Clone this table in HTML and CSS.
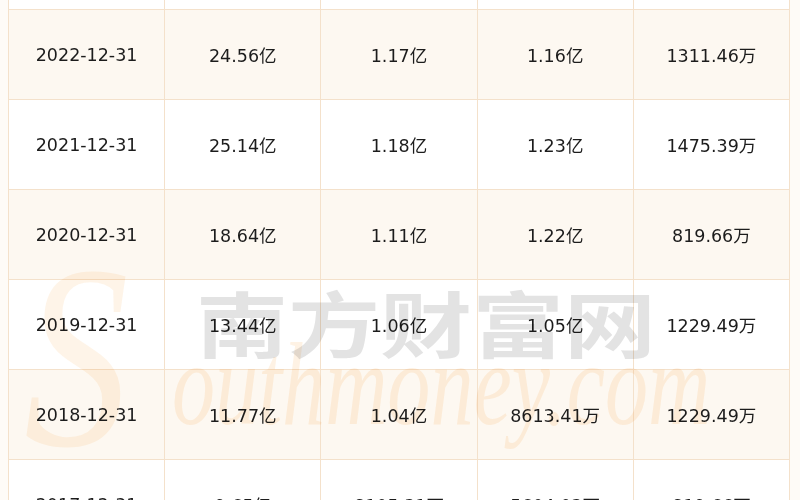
FILE: index.html
```html
<!DOCTYPE html>
<html lang="zh-CN">
<head>
<meta charset="utf-8">
<title>财务数据</title>
<link rel="stylesheet" href="styles.css">
</head>
<body>
<div class="page">
  <table class="data">
    <tbody>
      <tr class="stub"><td></td><td></td><td></td><td></td><td></td></tr>
      <tr class="alt"><td>2022-12-31</td><td>24.56亿</td><td>1.17亿</td><td>1.16亿</td><td>1311.46万</td></tr>
      <tr><td>2021-12-31</td><td>25.14亿</td><td>1.18亿</td><td>1.23亿</td><td>1475.39万</td></tr>
      <tr class="alt"><td>2020-12-31</td><td>18.64亿</td><td>1.11亿</td><td>1.22亿</td><td>819.66万</td></tr>
      <tr><td>2019-12-31</td><td>13.44亿</td><td>1.06亿</td><td>1.05亿</td><td>1229.49万</td></tr>
      <tr class="alt"><td>2018-12-31</td><td>11.77亿</td><td>1.04亿</td><td>8613.41万</td><td>1229.49万</td></tr>
      <tr><td>2017-12-31</td><td>9.65亿</td><td>8105.31万</td><td>5604.02万</td><td>819.66万</td></tr>
    </tbody>
  </table>
  <div class="wm wm-s">S</div>
  <div class="wm wm-en">outhmoney.com</div>
  <div class="wm wm-cn">南方财富网</div>
</div>
</body>
</html>
```

FILE: styles.css
```css
html, body {
  margin: 0;
  padding: 0;
  background: #fefbf7;
}
.page {
  position: relative;
  width: 800px;
  height: 500px;
  overflow: hidden;
  padding-left: 8px;
  box-sizing: border-box;
}
.data {
  border-collapse: collapse;
  table-layout: fixed;
  width: 782px;
  font-family: "DejaVu Sans", "Noto Sans CJK SC", sans-serif;
  font-size: 17.5px;
  color: #1c1c1c;
}
.data td {
  border: 1px solid #f4e1cb;
  height: 89px;
  padding: 0;
  text-align: center;
  vertical-align: middle;
  background: #ffffff;
  white-space: nowrap;
}
.data tr.alt td {
  background: #fdf8f1;
}
.data tr.stub td {
  height: 9px;
  border-top: none;
}
.wm {
  position: absolute;
  pointer-events: none;
  line-height: 1;
  white-space: nowrap;
  mix-blend-mode: multiply;
}
.wm-s {
  left: 24px;
  top: 226px;
  font-family: "Liberation Serif", serif;
  font-style: italic;
  font-size: 262px;
  color: rgba(250, 205, 150, 0.22);
  transform: scaleX(0.8);
  transform-origin: left top;
}
.wm-en {
  left: 172px;
  top: 326px;
  font-family: "Liberation Serif", serif;
  font-style: italic;
  font-size: 118px;
  color: rgba(250, 205, 150, 0.26);
  transform: scaleX(0.73);
  transform-origin: left top;
}
.wm-cn {
  left: 196px;
  top: 285px;
  font-family: "Noto Sans CJK SC", sans-serif;
  font-weight: 700;
  font-size: 92px;
  line-height: 92px;
  color: rgba(140, 140, 140, 0.24);
  transform: scaleY(0.78);
  transform-origin: left top;
}
```
